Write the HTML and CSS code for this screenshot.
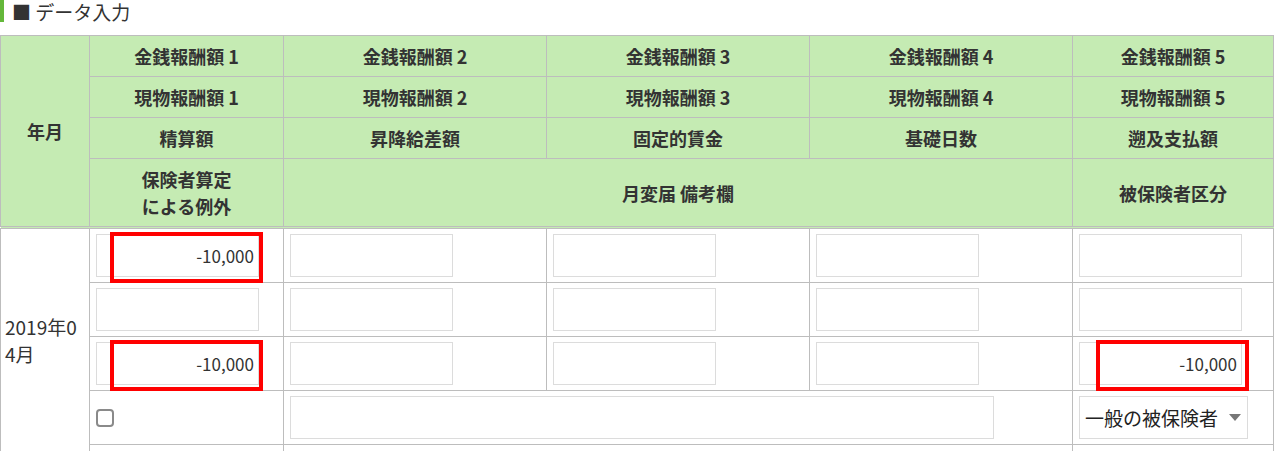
FILE: index.html
```html
<!DOCTYPE html>
<html lang="ja">
<head>
    <meta charset="utf-8">
    <meta name="viewport" content="width=device-width, initial-scale=1">
    <title>データ入力</title>
    <link rel="stylesheet" href="styles.css">
</head>
<body>
    <div class="sectionTitle"><span class="titleText">■ データ入力</span></div>

    <table class="dataTable">
        <colgroup>
            <col class="colYm">
            <col class="colA">
            <col class="colB">
            <col class="colB">
            <col class="colB">
            <col class="colC">
        </colgroup>
        <thead>
            <tr>
                <th rowspan="4" class="headEnd">年月</th>
                <th>金銭報酬額 1</th>
                <th>金銭報酬額 2</th>
                <th>金銭報酬額 3</th>
                <th>金銭報酬額 4</th>
                <th>金銭報酬額 5</th>
            </tr>
            <tr>
                <th>現物報酬額 1</th>
                <th>現物報酬額 2</th>
                <th>現物報酬額 3</th>
                <th>現物報酬額 4</th>
                <th>現物報酬額 5</th>
            </tr>
            <tr>
                <th>精算額</th>
                <th>昇降給差額</th>
                <th>固定的賃金</th>
                <th>基礎日数</th>
                <th>遡及支払額</th>
            </tr>
            <tr>
                <th class="headEnd">保険者算定<br>による例外</th>
                <th colspan="3" class="headEnd">月変届 備考欄</th>
                <th class="headEnd">被保険者区分</th>
            </tr>
        </thead>
        <tbody>
            <tr>
                <td rowspan="5" class="ymCell">2019年04月</td>
                <td><span class="marked"><input class="numInput" type="text" value="-10,000"><span class="redMark"></span></span></td>
                <td><input class="numInput" type="text"></td>
                <td><input class="numInput" type="text"></td>
                <td><input class="numInput" type="text"></td>
                <td><input class="numInput" type="text"></td>
            </tr>
            <tr>
                <td><input class="numInput" type="text"></td>
                <td><input class="numInput" type="text"></td>
                <td><input class="numInput" type="text"></td>
                <td><input class="numInput" type="text"></td>
                <td><input class="numInput" type="text"></td>
            </tr>
            <tr>
                <td><span class="marked"><input class="numInput" type="text" value="-10,000"><span class="redMark"></span></span></td>
                <td><input class="numInput" type="text"></td>
                <td><input class="numInput" type="text"></td>
                <td><input class="numInput" type="text"></td>
                <td><span class="marked"><input class="numInput" type="text" value="-10,000"><span class="redMark redMarkRight"></span></span></td>
            </tr>
            <tr>
                <td><input class="checkInput" type="checkbox"></td>
                <td colspan="3"><input class="noteInput" type="text"></td>
                <td>
                    <span class="selectWrap">
                        <select class="kindSelect">
                            <option>一般の被保険者</option>
                        </select>
                    </span>
                </td>
            </tr>
            <tr class="spacerRow">
                <td></td>
                <td colspan="3"></td>
                <td></td>
            </tr>
        </tbody>
    </table>
</body>
</html>
```

FILE: styles.css
```css
body {
    margin: 0;
    background-color: #fff;
    color: #333;
    font-family: "Noto Sans CJK JP", sans-serif;
}

.sectionTitle {
    display: flex;
    align-items: flex-start;
    height: 27px;
    margin-bottom: 8px;
}

.sectionTitle::before {
    content: "";
    width: 4px;
    height: 22px;
    background-color: #64b83a;
}

.titleText {
    padding-left: 8px;
    font-size: 19px;
    line-height: 27px;
    color: #333;
    margin-top: -2px;
}

.dataTable {
    width: 1274px;
    table-layout: fixed;
    border-collapse: collapse;
    border: 1px solid #bdbdbd;
}

.colYm {
    width: 89px;
}

.colA {
    width: 194px;
}

.colB {
    width: 263px;
}

.colC {
    width: 201px;
}

.dataTable th,
.dataTable td {
    border: 1px solid #bdbdbd;
}

.dataTable th {
    padding: 7px 4px 6px;
    background-color: #c5ebb3;
    font-size: 18px;
    font-weight: bold;
    line-height: 27px;
    color: #333;
    text-align: center;
}

.dataTable th.headEnd {
    border-bottom: 3px double #bdbdbd;
}

.dataTable td {
    padding: 5px 6px;
    vertical-align: middle;
}

.dataTable td.ymCell {
    padding: 0 10px 0 4px;
    font-size: 19px;
    line-height: 27px;
    word-break: break-all;
}

.spacerRow td {
    height: 6px;
    padding: 0;
}

.numInput,
.noteInput,
.kindSelect {
    box-sizing: border-box;
    height: 43px;
    margin: 0;
    border: 1px solid #dcdcdc;
    background-color: #fff;
    font-family: "Noto Sans CJK JP", sans-serif;
    color: #333;
    outline: none;
}

.numInput {
    display: block;
    width: 163px;
    padding: 0 4px;
    font-size: 17px;
    text-align: right;
}

.noteInput {
    display: block;
    width: 704px;
    padding: 0 6px;
    font-size: 17px;
}

.marked {
    position: relative;
    display: block;
    width: 163px;
}

.redMark {
    position: absolute;
    left: 14px;
    top: -2px;
    box-sizing: border-box;
    width: 153px;
    height: 51px;
    border: 4px solid #ff0000;
    pointer-events: none;
}

.redMarkRight {
    left: 17px;
}

.checkInput {
    appearance: none;
    -webkit-appearance: none;
    display: block;
    box-sizing: border-box;
    width: 18px;
    height: 18px;
    margin: 0;
    border: 2px solid #8a8a8a;
    border-radius: 4px;
    background-color: #fff;
}

.selectWrap {
    position: relative;
    display: block;
    width: 169px;
}

.selectWrap::after {
    content: "";
    position: absolute;
    right: 7px;
    top: 18px;
    border-left: 6px solid transparent;
    border-right: 6px solid transparent;
    border-top: 7px solid #777;
    pointer-events: none;
}

.kindSelect {
    appearance: none;
    -webkit-appearance: none;
    display: block;
    width: 169px;
    padding: 0 5px;
    border-radius: 0;
    font-size: 19px;
    color: #222;
}
```
